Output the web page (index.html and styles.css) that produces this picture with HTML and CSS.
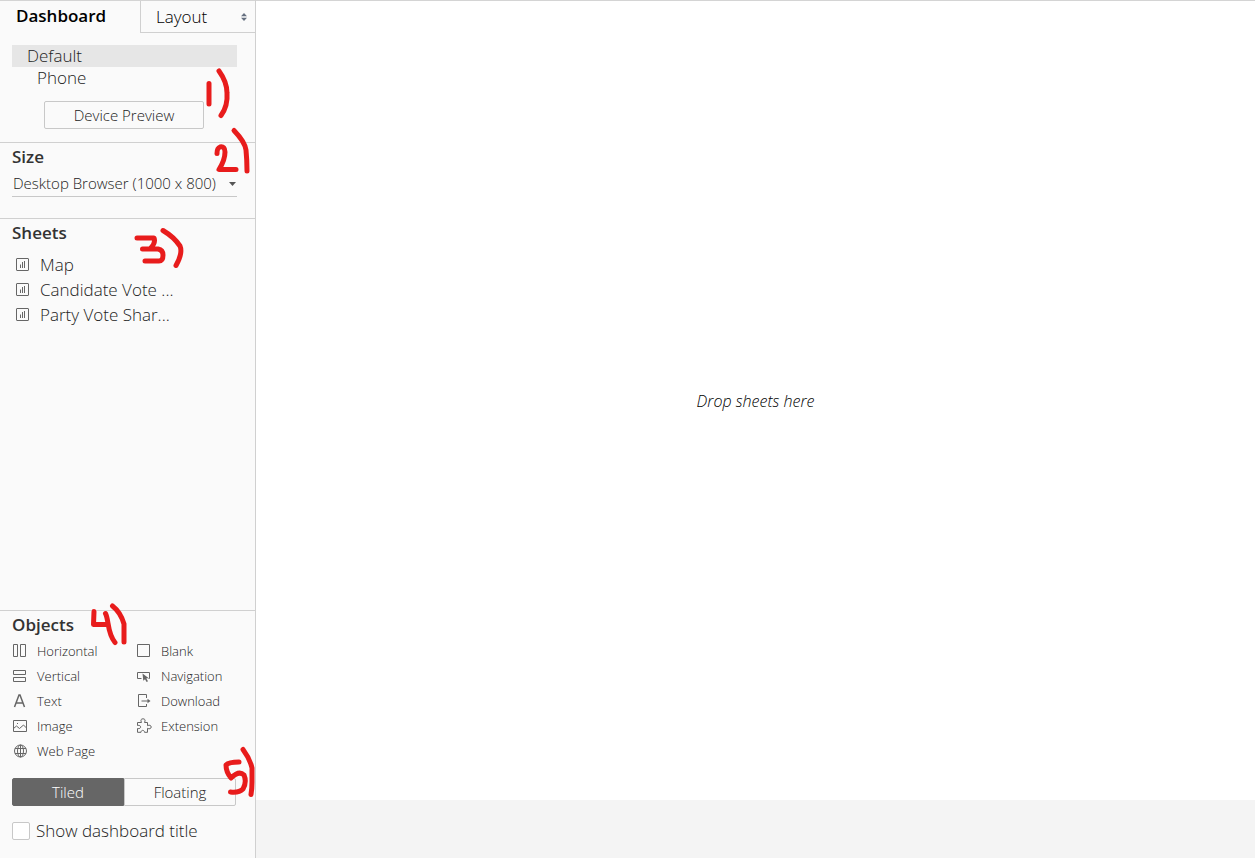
FILE: index.html
```html
<!DOCTYPE html>
<html lang="en">
<head>
<meta charset="utf-8">
<title>Dashboard</title>
<link rel="stylesheet" href="styles.css">
</head>
<body>
<div class="app">
  <aside class="sidebar">
    <section class="devices">
      <div class="tabs" role="tablist">
        <button class="tab tab-active" role="tab" aria-selected="true">Dashboard</button>
        <button class="tab tab-idle" role="tab" aria-selected="false">Layout
          <svg class="sorter" width="6" height="8" viewBox="0 0 6 8"><path d="M0 3.2 3 0l3 3.2zM0 4.8 3 8l3-3.2z"/></svg>
        </button>
      </div>
      <ul class="device-list">
        <li class="device device-selected">Default</li>
        <li class="device device-child">Phone</li>
      </ul>
      <button class="preview">Device Preview</button>
      <svg class="mark" width="256" height="142" viewBox="0 0 256 142"><path d="M209 83.500V104M219 71Q227 82 227 93Q228 106 221 115.500"/></svg>
    </section>

    <section class="panel size">
      <h2><label for="size">Size</label></h2>
      <div class="size-field">
        <select id="size"><option>Desktop Browser (1000 x 800)</option></select>
        <svg class="caret" width="7" height="4" viewBox="0 0 7 4"><path d="M0 0h7L3.500 4z"/></svg>
      </div>
      <svg class="mark" width="256" height="76" viewBox="0 142 256 76"><path d="M217 153.500Q217 148 220 147Q225 146 225 152Q225 160 219 169.500H236M234 130.500Q245 142 246 150Q247 160 247 171"/></svg>
    </section>

    <section class="panel sheets">
      <h2>Sheets</h2>
      <ul class="sheet-list">
        <li><svg class="icon" width="15" height="15" viewBox="0 0 15 15"><rect x="1.500" y="1.500" width="12" height="12" rx=".5"/><path d="M5.500 7.500V11M7.500 5V11M9.500 4V11"/></svg><span>Map</span></li>
        <li><svg class="icon" width="15" height="15" viewBox="0 0 15 15"><rect x="1.500" y="1.500" width="12" height="12" rx=".5"/><path d="M5.500 7.500V11M7.500 5V11M9.500 4V11"/></svg><span>Candidate Vote ...</span></li>
        <li><svg class="icon" width="15" height="15" viewBox="0 0 15 15"><rect x="1.500" y="1.500" width="12" height="12" rx=".5"/><path d="M5.500 7.500V11M7.500 5V11M9.500 4V11"/></svg><span>Party Vote Shar...</span></li>
      </ul>
      <svg class="mark" width="256" height="76" viewBox="0 218 256 76"><path d="M137 238H154Q156 243 150 249H142.500M150 249H158Q163 250 163 255Q163 261 159 261H145M163 230.500Q174 237 180 246Q183 253 176 265.500"/></svg>
    </section>

    <section class="panel objects">
      <h2>Objects</h2>
      <div class="object-grid">
        <ul class="object-list">
          <li><svg class="icon" width="16" height="16" viewBox="0 0 16 16"><path d="M1.500 1.500h4v12h-4zM8.500 1.500h5v12h-5z"/></svg>Horizontal</li>
          <li><svg class="icon" width="16" height="16" viewBox="0 0 16 16"><path d="M1.500 2.500h12v4h-12zM1.500 9.500h12v4h-12z"/></svg>Vertical</li>
          <li><svg class="icon" width="16" height="16" viewBox="0 0 16 16"><path class="bold" d="M2.500 14 7 2h1l4.500 12M4.200 10h6.600"/></svg>Text</li>
          <li><svg class="icon" width="16" height="16" viewBox="0 0 16 16"><path d="M1.500 2.500h13v11h-13zM1.500 10.500l3-2.500 3 2.500 4-3.500 3 3M5 5.500h1"/></svg>Image</li>
          <li><svg class="icon" width="16" height="16" viewBox="0 0 16 16"><circle cx="8.500" cy="8" r="6"/><ellipse cx="8.500" cy="8" rx="3" ry="6"/><path d="M8.500 2v12M3 5.500h11M3 10.500h11"/></svg>Web Page</li>
        </ul>
        <ul class="object-list">
          <li><svg class="icon" width="16" height="16" viewBox="0 0 16 16"><path d="M1.500 1.500h12v12h-12z"/></svg>Blank</li>
          <li><svg class="icon" width="16" height="16" viewBox="0 0 16 16"><path d="M5.500 10.500h-4v-6h12v6h-1"/><path class="solid" d="M6.500 5.500l6 4.500-2.200.6 1.700 2.700-1.400.7-1.600-2.700-1.700 1.500z"/></svg>Navigation</li>
          <li><svg class="icon" width="16" height="16" viewBox="0 0 16 16"><path d="M10.500 5V1.500h-8v12h8V11M5.500 8h7"/><path class="solid" d="M11.500 5.800 14.500 8l-3 2.200z"/></svg>Download</li>
          <li><svg class="icon" width="16" height="16" viewBox="0 0 16 16"><path d="M1.500 4.500h4C4.200 2 5.200.8 7 .8S9.800 2 8.500 4.500h3v3.200c2-1.200 3.700-.2 3.700 1.300s-1.700 2.500-3.700 1.300v4H8.500c0-2.600-3.500-2.600-3.500 0H1.500v-3.800c4.200 1 4.200-4 0-3z"/></svg>Extension</li>
        </ul>
      </div>
      <div class="modes">
        <button class="mode mode-on" aria-pressed="true">Tiled</button>
        <button class="mode" aria-pressed="false">Floating</button>
      </div>
      <label class="title-toggle"><input type="checkbox">Show dashboard title</label>
      <svg class="mark" width="256" height="248" viewBox="0 610 256 248"><path d="M94 611.500 93.500 624.500H108M105.500 613.500C109 620 107 633 115 642.500M112.500 606C119 611 122 617 124 624V642M239 762Q229 762 226 765Q226 772 231 778Q239 770 244 775Q247 782 243 789Q239 793 230.500 792M243 749.500Q250 759 252 768V782Q252 789 251 794.500"/></svg>
    </section>
  </aside>
  <main class="workspace">
    <div class="canvas"><p>Drop sheets here</p></div>
    <div class="gutter"></div>
  </main>
</div>
</body>
</html>
```
FILE: styles.css
```css
* { box-sizing: border-box; }
body {
  margin: 0;
  font-family: "Open Sans", "Noto Sans", sans-serif;
  font-size: 17px;
  font-weight: 300;
  line-height: 22px;
  color: #222;
}
ul, h2, p { margin: 0; padding: 0; list-style: none; }
button, select, input { font: inherit; color: inherit; margin: 0; }
.app { display: flex; min-height: 100vh; }
.sidebar {
  width: 256px;
  flex: none;
  display: flex;
  flex-direction: column;
  background: #fafafa;
  border-right: 1px solid #d0d0d0;
}
.devices {
  position: relative;
  display: flex;
  flex-direction: column;
  border-top: 1px solid #d4d4d4;
  padding-bottom: 13px;
}
.tabs { display: flex; height: 32px; margin-bottom: 12px; color: #000; }
.tab { border: 0; background: none; text-align: left; padding: 0 0 0 16px; }
.tab-active { width: 140px; font-weight: 600; padding-bottom: 2px; }
.tab-idle {
  flex: 1;
  display: flex;
  align-items: center;
  justify-content: space-between;
  padding-left: 15px;
  padding-right: 8px;
  border-left: 1px solid #d0d0d0;
  border-bottom: 1px solid #d0d0d0;
}
.sorter { fill: #667080; }
.device-list { margin: 0 18px 12px 12px; }
.device { padding-left: 15px; height: 22px; }
.device-selected { background: #e6e6e6; }
.device-child { padding-left: 25px; }
.preview {
  width: 160px;
  height: 28px;
  margin-left: 44px;
  padding: 0;
  border: 1px solid #c8c8c8;
  border-radius: 2px;
  background: #fafafa;
  font-size: 15px;
}
.panel { position: relative; border-top: 1px solid #d0d0d0; padding: 3px 18px 0 12px; }
h2 { font-size: 17px; font-weight: 600; line-height: 22px; color: #333; }
.size { height: 76px; }
.size-field { position: relative; height: 29px; border-bottom: 1px solid #c8c8c8; }
.size-field select {
  appearance: none;
  width: 100%;
  height: 29px;
  padding: 0 0 0 1px;
  border: 0;
  background: none;
  font-size: 15px;
}
.caret { position: absolute; right: 1px; top: 14px; fill: #555; pointer-events: none; }
.sheets { flex: 1; min-height: 140px; }
.sheet-list { margin-top: 8px; }
.sheet-list li { display: flex; align-items: center; gap: 10px; height: 25px; padding-left: 3px; }
.icon { flex: none; fill: none; stroke: #666; stroke-width: 1; }
.icon .bold { stroke-width: 1.5; }
.icon .solid { fill: #666; stroke: none; }
.objects { padding-bottom: 16px; }
.object-grid { display: grid; grid-template-columns: 124px 1fr; margin-top: 2px; font-size: 13px; }
.object-list li { display: flex; align-items: center; gap: 9px; height: 25px; }
.modes { display: flex; margin: 15px 1px 14px 0; }
.mode {
  flex: 1;
  height: 28px;
  padding: 0;
  border: 1px solid #c8c8c8;
  border-radius: 0 2px 2px 0;
  background: #fafafa;
  font-size: 15px;
}
.mode-on { background: #666; border-color: #666; border-radius: 2px 0 0 2px; color: #fff; }
.title-toggle { display: flex; align-items: center; gap: 6px; }
.title-toggle input {
  appearance: none;
  width: 18px;
  height: 18px;
  background: #fff;
  border: 1px solid #c8c8c8;
  border-radius: 2px;
}
.mark {
  position: absolute;
  left: 0;
  top: -1px;
  z-index: 1;
  overflow: visible;
  pointer-events: none;
  fill: none;
  stroke: #e81c1c;
  stroke-width: 5;
  stroke-linecap: round;
  stroke-linejoin: round;
}
.workspace { flex: 1; display: flex; flex-direction: column; }
.canvas {
  flex: 1;
  display: flex;
  align-items: center;
  justify-content: center;
  background: #fff;
  border-top: 1px solid #d4d4d4;
  color: #000;
  font-size: 16px;
  font-style: italic;
}
.gutter { height: 58px; background: #f4f4f4; }
```
